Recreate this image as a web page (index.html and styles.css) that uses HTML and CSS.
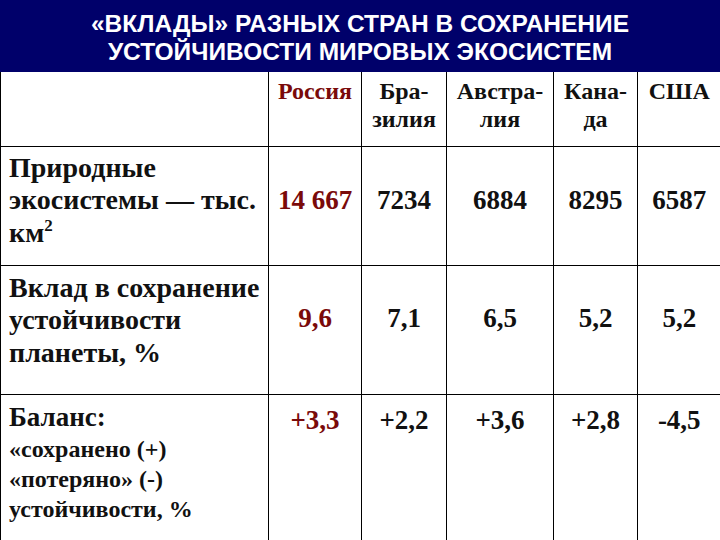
FILE: index.html
```html
<!DOCTYPE html>
<html lang="ru">
<head>
<meta charset="utf-8">
<title>Вклады разных стран</title>
<link rel="stylesheet" href="styles.css">
</head>
<body>
<div class="slide">
  <header class="title">
    <div>«ВКЛАДЫ» РАЗНЫХ СТРАН В СОХРАНЕНИЕ</div>
    <div>УСТОЙЧИВОСТИ МИРОВЫХ ЭКОСИСТЕМ</div>
  </header>
  <table class="grid">
    <colgroup>
      <col class="c-label">
      <col class="c-ru">
      <col class="c-br">
      <col class="c-au">
      <col class="c-ca">
      <col class="c-us">
    </colgroup>
    <tr class="head">
      <td></td>
      <td class="ru">Россия</td>
      <td>Бра-<br>зилия</td>
      <td>Австра-<br>лия</td>
      <td>Кана-<br>да</td>
      <td>США</td>
    </tr>
    <tr class="r1">
      <td class="label">Природные<br>экосистемы — тыс.<br>км<sup>2</sup></td>
      <td class="num ru">14 667</td>
      <td class="num">7234</td>
      <td class="num">6884</td>
      <td class="num">8295</td>
      <td class="num">6587</td>
    </tr>
    <tr class="r2">
      <td class="label">Вклад в сохранение<br>устойчивости<br>планеты, %</td>
      <td class="num ru">9,6</td>
      <td class="num">7,1</td>
      <td class="num">6,5</td>
      <td class="num">5,2</td>
      <td class="num">5,2</td>
    </tr>
    <tr class="r3">
      <td class="label"><span class="big">Баланс:</span><span class="small">«сохранено (+)<br>«потеряно» (-)<br>устойчивости, %</span></td>
      <td class="num ru">+3,3</td>
      <td class="num">+2,2</td>
      <td class="num">+3,6</td>
      <td class="num">+2,8</td>
      <td class="num">-4,5</td>
    </tr>
  </table>
</div>
</body>
</html>
```
FILE: styles.css
```css
html, body {
  margin: 0;
  padding: 0;
  background: #ffffff;
}
.slide {
  width: 720px;
  height: 540px;
  overflow: hidden;
  background: #ffffff;
}
.title {
  height: 72px;
  box-sizing: border-box;
  background: #00006a;
  color: #ffffff;
  font-family: "Liberation Sans", Arial, sans-serif;
  font-weight: bold;
  font-size: 24.5px;
  line-height: 28px;
  text-align: center;
  padding-top: 10px;
}
.grid {
  width: 720px;
  border-collapse: collapse;
  table-layout: fixed;
  font-family: "Liberation Serif", "Times New Roman", serif;
  font-weight: bold;
  color: #111111;
}
.c-label { width: 268px; }
.c-ru { width: 93px; }
.c-br { width: 85px; }
.c-au { width: 107px; }
.c-ca { width: 84px; }
.c-us { width: 83px; }
.grid td {
  border: 1px solid #000000;
  padding: 0;
  vertical-align: top;
  text-align: center;
  box-sizing: border-box;
}
.grid tr:first-child td { border-top: none; }
.grid td:last-child { border-right: none; }
.head td {
  height: 74px;
  font-size: 24px;
  line-height: 28px;
  padding-top: 5px;
}
.ru { color: #7a0a0a; }
.label {
  text-align: left !important;
  padding-left: 8px !important;
  font-size: 28px;
  line-height: 32.5px;
}
.r1 td { height: 119px; }
.r2 td { height: 129px; }
.r3 td { height: 150px; }
.r1 .label { padding-top: 5px; }
.r2 .label { padding-top: 6px; }
.num {
  font-size: 27px;
  line-height: 33px;
}
.r1 .num { padding-top: 37px; }
.r2 .num { padding-top: 36px; }
.r3 .num { padding-top: 9px; }
.r3 .label { padding-top: 6px; }
.big {
  display: block;
  font-size: 27px;
  line-height: 33px;
}
.small {
  display: block;
  font-size: 24px;
  line-height: 30px;
}
sup {
  font-size: 17px;
  line-height: 0;
  vertical-align: 11px;
}
```
